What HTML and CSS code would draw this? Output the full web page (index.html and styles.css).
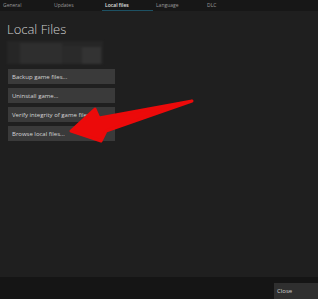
FILE: index.html
```
<!DOCTYPE html>
<html lang="en">
<head>
    <meta charset="UTF-8">
    <meta name="viewport" content="width=device-width, initial-scale=1.0">
    <title>Local Files</title>
    <link rel="stylesheet" href="styles.css">
</head>
<body>

    <!-- Tabs -->
    <div class="tabs">
        <div class="tab">General</div>
        <div class="tab">Updates</div>
        <div class="tab active">Local files</div>
        <div class="tab">Language</div>
        <div class="tab">DLC</div>
    </div>

    <!-- Content -->
    <div class="content">
        <h1 class="title">Local Files</h1>

        <!-- blurred info block -->
        <div class="blurred">
            <div class="blur-a"></div>
            <div class="blur-b"></div>
            <div class="blur-c"></div>
            <div class="blur-d"></div>
        </div>

        <div class="actions">
            <button class="action">Backup game files...</button>
            <button class="action">Uninstall game...</button>
            <button class="action">Verify integrity of game files...</button>
            <button class="action">Browse local files...</button>
        </div>

        <!-- Annotation arrow -->
        <svg class="arrow" width="318" height="299" viewBox="0 0 318 299">
            <polygon points="71,131 95,109 99,118 192,101 106,131 101,141"
                     fill="#ec0a0a" stroke="#ec0a0a" stroke-width="3" stroke-linejoin="round"/>
        </svg>
    </div>

    <!-- Footer -->
    <div class="footer">
        <button class="close">Close</button>
    </div>

</body>
</html>
```

FILE: styles.css
```
body {
    font-family: "Open Sans", "Noto Sans", sans-serif;
    margin: 0;
    padding: 0;
    width: 318px;
    height: 299px;
    display: flex;
    flex-direction: column;
    background-color: #1f1f1f;
    overflow: hidden;
}

.tabs {
    display: flex;
    height: 11px;
    background-color: #171717;
}

.tab {
    width: 51px;
    padding-left: 3px;
    box-sizing: border-box;
    font-size: 5px;
    line-height: 10px;
    color: #9a9a9a;
}

.tab.active {
    color: #e0e0e0;
    font-weight: 600;
    border-bottom: 1px solid #1d5163;
}

.content {
    flex: 1;
    padding-left: 7px;
}

.title {
    margin: 10px 0 0 0;
    font-size: 13px;
    line-height: 16px;
    font-weight: 300;
    color: #cfcfcf;
}

/* Bloque difuminado */
.blurred {
    display: flex;
    width: 96px;
    height: 23px;
    margin-top: 4px;
    background-color: #262626;
    filter: blur(1px);
}

.blur-a {
    width: 13px;
}

.blur-b {
    width: 42px;
    margin-top: 2px;
    background-color: #2e2e2e;
}

.blur-c {
    width: 20px;
    margin-top: 5px;
    background-color: #2a2a2a;
}

.blur-d {
    width: 19px;
    margin-top: 6px;
    background-color: #333333;
}

.actions {
    display: flex;
    flex-direction: column;
    gap: 4px;
    margin-top: 5px;
    margin-left: 1px;
}

.action {
    width: 107px;
    height: 15px;
    padding: 0 0 0 4px;
    border: none;
    text-align: left;
    font-family: "Open Sans", "Noto Sans", sans-serif;
    font-size: 6px;
    color: #d6d6d6;
    background-color: #3a3a3a;
    white-space: nowrap;
    overflow: hidden;
}

.arrow {
    position: absolute;
    left: 0;
    top: 0;
}

.footer {
    height: 22px;
    background-color: #151515;
    display: flex;
    justify-content: flex-end;
    align-items: flex-end;
}

.close {
    width: 44px;
    height: 16px;
    padding: 0 0 0 3px;
    border: none;
    text-align: left;
    font-family: "Open Sans", "Noto Sans", sans-serif;
    font-size: 6px;
    color: #cfcfcf;
    background-color: #2f2f2f;
}
```
